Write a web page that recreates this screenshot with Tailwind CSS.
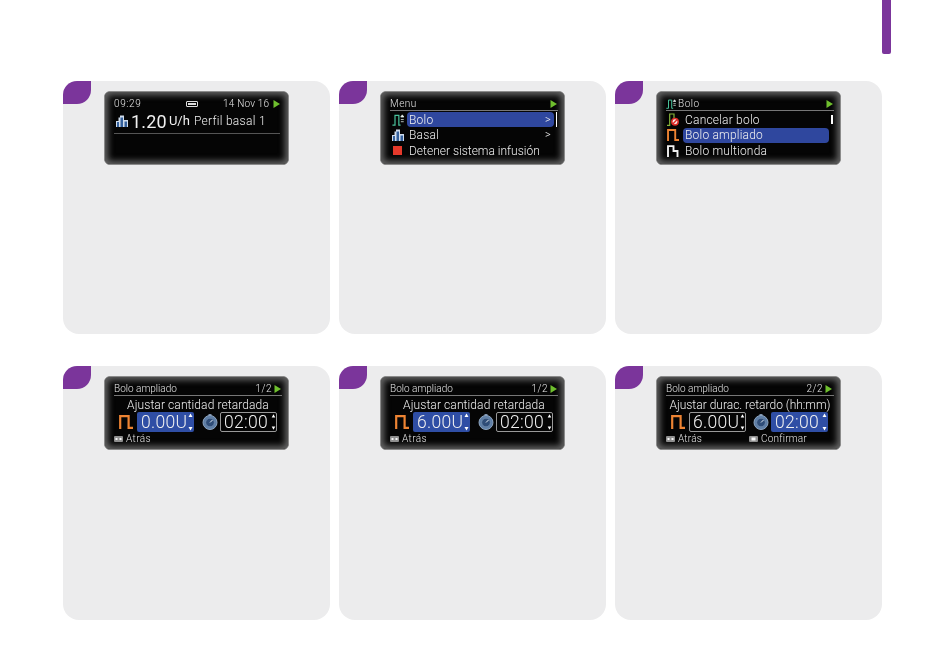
<!DOCTYPE html>
<html lang="es">
<head>
  <meta charset="UTF-8">
  <title>Bolo ampliado</title>
  <script src="https://cdn.jsdelivr.net/npm/@tailwindcss/browser@4"></script>
</head>
<body class="bg-white w-[950px] h-[670px] overflow-hidden font-['Roboto','Liberation_Sans',Arial,sans-serif] font-light text-[#f0f0f0]">
  <svg class="hidden">
    <defs>
      <symbol id="play" viewBox="0 0 7 8"><path d="M0.5 0 L7 4 L0.5 8 Z" fill="#6fbf2e"/></symbol>
      <symbol id="basal" viewBox="0 0 12 12"><path d="M0 12V6H2.5V2.5H4V0.5H8V5H12V12Z" fill="#cfdcec"/><path d="M1 12V7H3V12ZM4.5 12V2.5H7V12ZM8.5 12V6.5H11V12Z" fill="#34609c"/></symbol>
      <symbol id="bolus" viewBox="0 0 14 14"><path d="M0.5 13H3.5V1.5H8V13H10" fill="none" stroke="#49c29b" stroke-width="1.4"/><path d="M12 1 L13.8 3.5H10.2ZM10.3 6.5h3.4M10.3 9h3.4" fill="#e6f2ee" stroke="#e6f2ee" stroke-width=".9"/></symbol>
      <symbol id="cancel" viewBox="0 0 12 13"><path d="M0 12.3H2.7V1H7V5" fill="none" stroke="#86b53a" stroke-width="1.2"/><circle cx="8" cy="8.8" r="3.2" fill="#f8e8e8" stroke="#dd2a25" stroke-width="1.5"/><path d="M5.8 11L10.2 6.6" stroke="#dd2a25" stroke-width="1.4"/></symbol>
      <symbol id="pulse" viewBox="0 0 14 14"><path d="M1.2 14V1.2H9.6V12.8H14" fill="none" stroke="#ee8433" stroke-width="2.2"/></symbol>
      <symbol id="multi" viewBox="0 0 12 12"><path d="M1 12V1.1H6.5V6H10.5V12" fill="none" stroke="#f2f2f2" stroke-width="1.9"/></symbol>
      <symbol id="watch" viewBox="0 0 16 16"><rect x="6.5" y="0" width="3" height="2" fill="#7f93ad"/><circle cx="8" cy="8.5" r="7" fill="#5d7ea6" stroke="#8ea4bf" stroke-width="1"/><circle cx="8" cy="8.5" r="4.3" fill="#2f4d78" stroke="#7d95b4" stroke-width=".6"/><path d="M8 8.5L10.5 6" stroke="#e6edf5" stroke-width="1"/></symbol>
      <symbol id="keys" viewBox="0 0 9 6"><rect width="9" height="6" rx="1" fill="#8f8f8f"/><rect x="1.5" y="2" width="2" height="2" fill="#f5f5f5"/><rect x="5.5" y="2" width="2" height="2" fill="#f5f5f5"/></symbol>
      <symbol id="key" viewBox="0 0 9 6"><rect width="9" height="6" rx="1" fill="#8f8f8f"/><rect x="2.5" y="1.5" width="4" height="3" fill="#f5f5f5"/></symbol>
      <symbol id="arrows" viewBox="0 0 5 20"><path d="M2.5 1.5L4.5 5H.5ZM2.5 18.5L4.5 15H.5Z" fill="#fff"/></symbol>
    </defs>
  </svg>

  <header class="h-[81px] pl-[882px]">
    <div class="w-[9px] h-[54px] bg-[#7b359b] rounded-b-[2px]"></div>
  </header>

  <main class="w-[819px] ml-[63px] grid grid-cols-[267px_267px_267px] grid-rows-[253px_254px] gap-x-[9px] gap-y-[32px]">

    <!-- 1: home -->
    <section class="bg-[#ececed] rounded-[16px] flex items-start">
      <div class="w-[28px] h-[23px] bg-[#7b359b] rounded-tl-[14px] rounded-br-[14px]"></div>
      <div class="ml-[13px] mt-[10px] w-[185px] h-[74px] bg-[#050505] rounded-[6px] border border-[#8b8b8b] shadow-[inset_0_0_6px_3px_#666] blur-[0.3px] pl-[9px] pr-[6px] pt-[5px]">
        <div class="h-[13px] flex items-center text-[10px] tracking-[.6px] text-[#e4e4e4]">
          <span class="w-[72px]">09:29</span>
          <span class="w-[12px] h-[6px] border border-[#ddd] rounded-[1px] p-[1px] mr-[25px]"><span class="block h-full bg-[#ddd]"></span></span>
          <span class="flex-1 tracking-[.2px]">14 Nov 16</span>
          <svg class="w-[7px] h-[8px] mr-[2px]"><use href="#play"/></svg>
        </div>
        <div class="flex items-center border-b border-[#555] pb-[1px] h-[24px] mr-[2px]">
          <svg class="w-[12px] h-[12px] ml-[2px] mr-[3px]"><use href="#basal"/></svg>
          <span class="text-[18px] font-normal tracking-[0.2px]">1.20</span>
          <span class="text-[13px] font-normal ml-[2px]">U/h</span>
          <span class="text-[12px] tracking-[.3px] ml-[4px]">Perfil basal 1</span>
        </div>
      </div>
    </section>

    <!-- 2: menu -->
    <section class="bg-[#ececed] rounded-[16px] flex items-start">
      <div class="w-[28px] h-[23px] bg-[#7b359b] rounded-tl-[14px] rounded-br-[14px]"></div>
      <div class="ml-[13px] mt-[10px] w-[185px] h-[74px] bg-[#050505] rounded-[6px] border border-[#8b8b8b] shadow-[inset_0_0_6px_3px_#666] blur-[0.3px] pl-[9px] pr-[6px] pt-[5px]">
        <div class="h-[14px] flex items-center justify-between border-b border-[#777] text-[10px] tracking-[.5px] text-[#e4e4e4]">
          <span>Menu</span>
          <svg class="w-[7px] h-[8px] mr-[1px]"><use href="#play"/></svg>
        </div>
        <div class="flex items-center h-[15.5px] mt-[1px] text-[12px] tracking-[.2px]">
          <svg class="w-[12px] h-[12px] ml-[2px] mr-[3px]"><use href="#bolus"/></svg>
          <div class="w-[147px] h-[15px] bg-[#2f479e] rounded-[4px] pl-[2px] flex items-center justify-between pr-[3px]"><span>Bolo</span><span class="text-[11px]">&gt;</span></div>
          <span class="w-[1px] h-[15px] bg-white ml-[2px]"></span>
        </div>
        <div class="flex items-center h-[15.5px] text-[12px] tracking-[.2px]">
          <svg class="w-[12px] h-[12px] ml-[2px] mr-[3px]"><use href="#basal"/></svg>
          <div class="w-[147px] pl-[2px] flex items-center justify-between pr-[3px]"><span>Basal</span><span class="text-[11px]">&gt;</span></div>
        </div>
        <div class="flex items-center h-[15.5px] text-[12px]">
          <span class="w-[9px] h-[9px] bg-[#e5392b] ml-[3px] mr-[5px]"></span>
          <span class="pl-[2px]">Detener sistema infusión</span>
        </div>
      </div>
    </section>

    <!-- 3: bolo menu -->
    <section class="bg-[#ececed] rounded-[16px] flex items-start">
      <div class="w-[28px] h-[23px] bg-[#7b359b] rounded-tl-[14px] rounded-br-[14px]"></div>
      <div class="ml-[13px] mt-[10px] w-[185px] h-[74px] bg-[#050505] rounded-[6px] border border-[#8b8b8b] shadow-[inset_0_0_6px_3px_#666] blur-[0.3px] pl-[9px] pr-[6px] pt-[5px]">
        <div class="h-[14px] flex items-center border-b border-[#777] text-[10px] tracking-[.5px] text-[#e4e4e4]">
          <svg class="w-[10px] h-[10px] mr-[2px]"><use href="#bolus"/></svg>
          <span class="flex-1">Bolo</span>
          <svg class="w-[7px] h-[8px] mr-[1px]"><use href="#play"/></svg>
        </div>
        <div class="flex items-center h-[15.5px] mt-[1px] text-[12px] tracking-[.2px]">
          <svg class="w-[12px] h-[13px] ml-[1px] mr-[4px]"><use href="#cancel"/></svg>
          <div class="w-[147px] pl-[2px]">Cancelar bolo</div>
          <span class="w-[2px] h-[9px] bg-white ml-[1px]"></span>
        </div>
        <div class="flex items-center h-[15.5px] text-[12px] tracking-[.2px]">
          <svg class="w-[12px] h-[12px] ml-[1px] mr-[4px]"><use href="#pulse"/></svg>
          <div class="w-[146px] h-[15px] bg-[#2f479e] rounded-[4px] pl-[2px] flex items-center">Bolo ampliado</div>
        </div>
        <div class="flex items-center h-[15.5px] text-[12px] tracking-[.2px]">
          <svg class="w-[12px] h-[12px] ml-[1px] mr-[4px]"><use href="#multi"/></svg>
          <span class="pl-[2px]">Bolo multionda</span>
        </div>
      </div>
    </section>

    <!-- 4 -->
    <section class="bg-[#ececed] rounded-[16px] flex items-start">
      <div class="w-[28px] h-[23px] bg-[#7b359b] rounded-tl-[14px] rounded-br-[14px]"></div>
      <div class="ml-[13px] mt-[10px] w-[185px] h-[74px] bg-[#050505] rounded-[6px] border border-[#8b8b8b] shadow-[inset_0_0_6px_3px_#666] blur-[0.3px] pl-[9px] pr-[6px] pt-[5px]">
        <div class="h-[14px] flex items-center border-b border-[#777] text-[10px] text-[#e4e4e4]">
          <span class="flex-1">Bolo ampliado</span><span class="mr-[2px] tracking-[.5px]">1/2</span>
          <svg class="w-[7px] h-[8px] mr-[1px]"><use href="#play"/></svg>
        </div>
        <div class="h-[15px] mt-[1px] text-center text-[12px] tracking-[.1px] leading-[17px]">Ajustar cantidad retardada</div>
        <div class="flex items-center h-[20px]">
          <svg class="w-[14px] h-[14px] ml-[5px] mr-[4px]"><use href="#pulse"/></svg>
          <div class="w-[57px] h-[20px] bg-[#2f4ea5] rounded-[2px] pl-[4px] flex items-center justify-between pr-[1px] text-[17.5px] tracking-[.3px]"><span>0.00U</span><svg class="w-[5px] h-[20px]"><use href="#arrows"/></svg></div>
          <svg class="w-[16px] h-[16px] ml-[8px] mr-[2px]"><use href="#watch"/></svg>
          <div class="w-[57px] h-[20px] border border-[#999] rounded-[2px] pl-[3px] flex items-center justify-between text-[17.5px] tracking-[.3px]"><span>02:00</span><svg class="w-[5px] h-[18px]"><use href="#arrows"/></svg></div>
        </div>
        <div class="flex items-center h-[11px] mt-[1px] text-[10px] tracking-[.4px] text-[#e4e4e4]">
          <svg class="w-[9px] h-[6px] mr-[3px]"><use href="#keys"/></svg><span>Atrás</span>
        </div>
      </div>
    </section>

    <!-- 5 -->
    <section class="bg-[#ececed] rounded-[16px] flex items-start">
      <div class="w-[28px] h-[23px] bg-[#7b359b] rounded-tl-[14px] rounded-br-[14px]"></div>
      <div class="ml-[13px] mt-[10px] w-[185px] h-[74px] bg-[#050505] rounded-[6px] border border-[#8b8b8b] shadow-[inset_0_0_6px_3px_#666] blur-[0.3px] pl-[9px] pr-[6px] pt-[5px]">
        <div class="h-[14px] flex items-center border-b border-[#777] text-[10px] text-[#e4e4e4]">
          <span class="flex-1">Bolo ampliado</span><span class="mr-[2px] tracking-[.5px]">1/2</span>
          <svg class="w-[7px] h-[8px] mr-[1px]"><use href="#play"/></svg>
        </div>
        <div class="h-[15px] mt-[1px] text-center text-[12px] tracking-[.1px] leading-[17px]">Ajustar cantidad retardada</div>
        <div class="flex items-center h-[20px]">
          <svg class="w-[14px] h-[14px] ml-[5px] mr-[4px]"><use href="#pulse"/></svg>
          <div class="w-[57px] h-[20px] bg-[#2f4ea5] rounded-[2px] pl-[4px] flex items-center justify-between pr-[1px] text-[17.5px] tracking-[.3px]"><span>6.00U</span><svg class="w-[5px] h-[20px]"><use href="#arrows"/></svg></div>
          <svg class="w-[16px] h-[16px] ml-[8px] mr-[2px]"><use href="#watch"/></svg>
          <div class="w-[57px] h-[20px] border border-[#999] rounded-[2px] pl-[3px] flex items-center justify-between text-[17.5px] tracking-[.3px]"><span>02:00</span><svg class="w-[5px] h-[18px]"><use href="#arrows"/></svg></div>
        </div>
        <div class="flex items-center h-[11px] mt-[1px] text-[10px] tracking-[.4px] text-[#e4e4e4]">
          <svg class="w-[9px] h-[6px] mr-[3px]"><use href="#keys"/></svg><span>Atrás</span>
        </div>
      </div>
    </section>

    <!-- 6 -->
    <section class="bg-[#ececed] rounded-[16px] flex items-start">
      <div class="w-[28px] h-[23px] bg-[#7b359b] rounded-tl-[14px] rounded-br-[14px]"></div>
      <div class="ml-[13px] mt-[10px] w-[185px] h-[74px] bg-[#050505] rounded-[6px] border border-[#8b8b8b] shadow-[inset_0_0_6px_3px_#666] blur-[0.3px] pl-[9px] pr-[6px] pt-[5px]">
        <div class="h-[14px] flex items-center border-b border-[#777] text-[10px] text-[#e4e4e4]">
          <span class="flex-1">Bolo ampliado</span><span class="mr-[2px] tracking-[.5px]">2/2</span>
          <svg class="w-[7px] h-[8px] mr-[2px]"><use href="#play"/></svg>
        </div>
        <div class="h-[15px] mt-[1px] text-center text-[12px] leading-[17px] whitespace-nowrap">Ajustar durac. retardo (hh:mm)</div>
        <div class="flex items-center h-[20px]">
          <svg class="w-[14px] h-[14px] ml-[5px] mr-[4px]"><use href="#pulse"/></svg>
          <div class="w-[57px] h-[20px] border border-[#999] rounded-[2px] pl-[3px] flex items-center justify-between text-[17.5px] tracking-[.3px]"><span>6.00U</span><svg class="w-[5px] h-[18px]"><use href="#arrows"/></svg></div>
          <svg class="w-[16px] h-[16px] ml-[7px] mr-[2px]"><use href="#watch"/></svg>
          <div class="w-[57px] h-[20px] bg-[#2f4ea5] rounded-[2px] pl-[4px] flex items-center justify-between pr-[1px] text-[17.5px] tracking-[.3px]"><span>02:00</span><svg class="w-[5px] h-[20px]"><use href="#arrows"/></svg></div>
        </div>
        <div class="flex items-center h-[11px] mt-[1px] text-[10px] tracking-[.2px] text-[#e4e4e4]">
          <svg class="w-[9px] h-[6px] mr-[3px]"><use href="#keys"/></svg><span class="w-[71px]">Atrás</span>
          <svg class="w-[9px] h-[6px] mr-[3px]"><use href="#key"/></svg><span>Confirmar</span>
        </div>
      </div>
    </section>
  </main>
</body>
</html>
